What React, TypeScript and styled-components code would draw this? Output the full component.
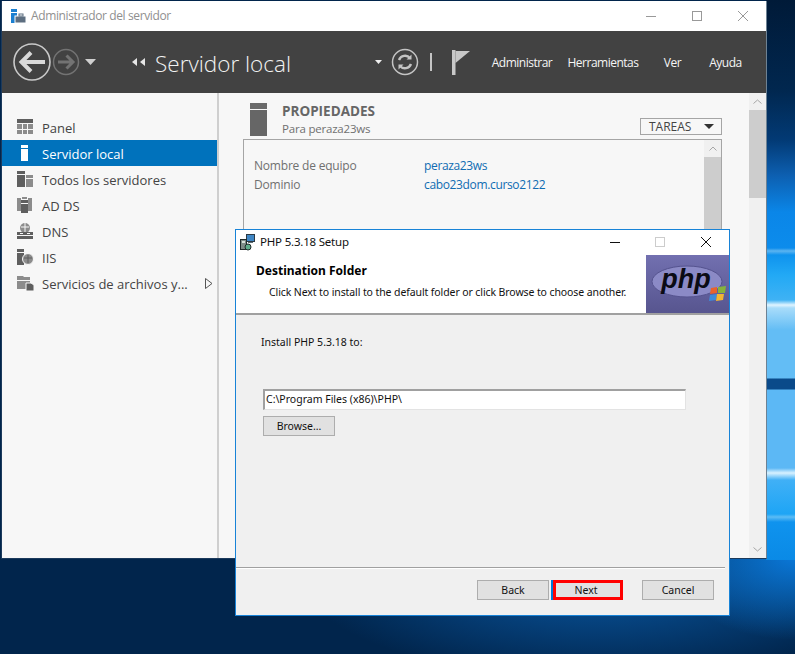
import React from "react";
import styled, { createGlobalStyle } from "styled-components";

const GlobalStyle = createGlobalStyle`
  html, body { margin: 0; padding: 0; height: 100%; overflow: hidden; }
  #root { height: 100%; }
`;

const navItems = [
  { label: "Panel", icon: "panel" },
  { label: "Servidor local", icon: "server", active: true },
  { label: "Todos los servidores", icon: "all" },
  { label: "AD DS", icon: "adds" },
  { label: "DNS", icon: "dns" },
  { label: "IIS", icon: "iis" },
  { label: "Servicios de archivos y...", icon: "files", more: true },
];

function NavIcon({ name, active }: { name: string; active?: boolean }) {
  const c = active ? "#fff" : "#5f5f5f";
  const l = "#8c8c8c";
  return (
    <svg width="17" height="16" viewBox="0 0 17 16">
      {name === "panel" && (
        <>
          <rect x="0" y="0" width="16" height="4" fill={c} />
          <rect x="0" y="5" width="5" height="5" fill={l} />
          <rect x="6" y="5" width="4" height="5" fill={l} />
          <rect x="11" y="5" width="5" height="5" fill={l} />
          <rect x="0" y="11" width="5" height="4" fill={l} />
          <rect x="6" y="11" width="4" height="4" fill={l} />
          <rect x="11" y="11" width="5" height="4" fill={l} />
        </>
      )}
      {name === "server" && (
        <>
          <rect x="4" y="0" width="7" height="3" fill={c} />
          <rect x="4" y="4" width="7" height="12" fill={c} />
        </>
      )}
      {name === "all" && (
        <>
          <rect x="0" y="0" width="8" height="3" fill={c} />
          <rect x="0" y="4" width="8" height="12" fill={c} />
          <rect x="9" y="4" width="7" height="3" fill={l} />
          <rect x="9" y="8" width="7" height="8" fill={l} />
        </>
      )}
      {name === "adds" && (
        <>
          <rect x="0" y="1" width="4" height="13" fill={l} />
          <rect x="11" y="1" width="4" height="13" fill={l} />
          <rect x="5" y="0" width="5" height="2" fill={l} />
          <rect x="4" y="3" width="7" height="3" fill={c} />
          <rect x="4" y="7" width="7" height="9" fill={c} />
        </>
      )}
      {name === "dns" && (
        <>
          <circle cx="8" cy="5" r="5" fill={l} />
          <path d="M4 4h8M8 0v9" stroke="#f7f7f7" strokeWidth="1" />
          <rect x="0" y="9" width="16" height="3" fill={c} />
          <rect x="0" y="13" width="16" height="3" fill={c} />
          <rect x="3" y="10" width="3" height="1" fill="#f7f7f7" />
          <rect x="10" y="10" width="3" height="1" fill="#f7f7f7" />
        </>
      )}
      {name === "iis" && (
        <>
          <rect x="0" y="0" width="7" height="3" fill={c} />
          <rect x="0" y="4" width="7" height="12" fill={c} />
          <circle cx="11" cy="10" r="5.5" fill={l} stroke="#f7f7f7" />
          <path d="M7 9h8M11 6v8" stroke="#5f5f5f" strokeWidth="1" />
        </>
      )}
      {name === "files" && (
        <>
          <path d="M0 1h6l1 1h6v3H0z" fill={l} />
          <rect x="0" y="6" width="13" height="8" fill={l} />
          <path d="M9 8h5l3 2v6H9z" fill={c} stroke="#f7f7f7" />
        </>
      )}
    </svg>
  );
}

export default function App() {
  return (
    <Desktop>
      <GlobalStyle />
      <ServerWindow>
        <TitleBar>
          <svg width="15" height="15" viewBox="0 0 15 15">
            <rect x="0" y="0" width="6" height="3" fill="#1a7fd0" />
            <rect x="0" y="4" width="6" height="10" fill="#1a7fd0" />
            <rect x="4" y="7" width="11" height="7" fill="#5d6e80" stroke="#fff" strokeWidth="1" />
            <rect x="8" y="5" width="4" height="2" fill="none" stroke="#5d6e80" />
          </svg>
          <AppTitle>Administrador del servidor</AppTitle>
          <WindowControls>
            <svg width="120" height="14" viewBox="0 0 120 14">
              <path d="M0 7.5h10" stroke="#999" />
              <rect x="46.5" y="2.5" width="9" height="9" fill="none" stroke="#999" />
              <path d="M92 2l10 10M102 2L92 12" stroke="#999" />
            </svg>
          </WindowControls>
        </TitleBar>

        <DarkBar>
          <svg width="104" height="40" viewBox="0 0 104 40">
            <circle cx="19" cy="20" r="18" fill="none" stroke="#c9c9c9" strokeWidth="1.6" />
            <path d="M32 20H9M18 10.5L8.5 20l9.5 9.5" fill="none" stroke="#d9d9d9" strokeWidth="4" />
            <circle cx="53" cy="20" r="12.5" fill="none" stroke="#737373" strokeWidth="1.5" />
            <path d="M45 20h15M53.5 13.5L60 20l-6.5 6.5" fill="none" stroke="#737373" strokeWidth="3" />
            <path d="M72 17h11l-5.5 6z" fill="#cfcfcf" />
          </svg>
          <Crumb>
            <svg width="14" height="8" viewBox="0 0 14 8">
              <path d="M5 0v8L0 4zM13 0v8L8 4z" fill="#e6e6e6" />
            </svg>
            <PageTitle>Servidor local</PageTitle>
          </Crumb>
          <BarTools>
            <svg width="77" height="30" viewBox="0 0 77 30">
              <path d="M0 13h7l-3.5 4z" fill="#eee" />
              <circle cx="30" cy="15" r="12.5" fill="none" stroke="#c4c4c4" strokeWidth="1.5" />
              <path d="M24 13a6.5 6.5 0 0 1 11-2M36 17a6.5 6.5 0 0 1-11 2" fill="none" stroke="#c4c4c4" strokeWidth="2.4" />
              <path d="M36.5 7.5v5h-5zM23.5 22.5v-5h5z" fill="#c4c4c4" />
              <rect x="55" y="6" width="2" height="18" fill="#c4c4c4" />
            </svg>
            <svg width="18" height="25" viewBox="0 0 18 25">
              <rect x="0" y="0" width="3.5" height="25" fill="#c8c8c8" />
              <path d="M3.5 1H18L3.5 13z" fill="#c8c8c8" />
            </svg>
          </BarTools>
          <Menu>
            <MenuItem $w={76}>Administrar</MenuItem>
            <MenuItem $w={86}>Herramientas</MenuItem>
            <MenuItem $w={53}>Ver</MenuItem>
            <MenuItem $w={53}>Ayuda</MenuItem>
          </Menu>
        </DarkBar>

        <Body>
          <Sidebar>
            {navItems.map((item) => (
              <NavRow key={item.label} $active={item.active}>
                <NavIcon name={item.icon} active={item.active} />
                <NavLabel>{item.label}</NavLabel>
                {item.more && (
                  <More width="8" height="11" viewBox="0 0 8 11">
                    <path d="M.5.5l6.5 5-6.5 5z" fill="none" stroke="#555" />
                  </More>
                )}
              </NavRow>
            ))}
          </Sidebar>

          <Content>
            <PropHead>
              <svg width="17" height="33" viewBox="0 0 17 33">
                <rect x="0" y="0" width="17" height="6" fill="#6a6a6a" />
                <rect x="0" y="7" width="17" height="26" fill="#666" />
              </svg>
              <PropTitles>
                <PropTitle>PROPIEDADES</PropTitle>
                <PropSub>Para peraza23ws</PropSub>
              </PropTitles>
              <TasksButton>
                TAREAS
                <svg width="10" height="5" viewBox="0 0 10 5">
                  <path d="M0 0h10L5 5z" fill="#333" />
                </svg>
              </TasksButton>
            </PropHead>
            <PropBox>
              <PropRows>
                <PropRow>
                  <PropName>Nombre de equipo</PropName>
                  <PropValue>peraza23ws</PropValue>
                </PropRow>
                <PropRow>
                  <PropName>Dominio</PropName>
                  <PropValue>cabo23dom.curso2122</PropValue>
                </PropRow>
              </PropRows>
              <InnerScroll>
                <ScrollArrow>
                  <svg width="8" height="5" viewBox="0 0 8 5">
                    <path d="M.5 4.5L4 1l3.5 3.5" fill="none" stroke="#a6a6a6" />
                  </svg>
                </ScrollArrow>
              </InnerScroll>
            </PropBox>
          </Content>

          <Scrollbar>
            <ScrollArrow>
              <svg width="9" height="5" viewBox="0 0 9 5">
                <path d="M.5 4.5L4.5 1l4 3.5" fill="none" stroke="#a6a6a6" />
              </svg>
            </ScrollArrow>
            <ScrollThumb />
            <BottomArrow>
              <svg width="9" height="5" viewBox="0 0 9 5">
                <path d="M.5.5l4 3.5 4-3.5" fill="none" stroke="#a6a6a6" />
              </svg>
            </BottomArrow>
          </Scrollbar>
        </Body>
      </ServerWindow>

      <Dialog>
        <DialogTitleBar>
          <svg width="16" height="17" viewBox="0 0 16 17">
            <rect x="7.5" y="0.5" width="8" height="7" fill="#3f86c4" stroke="#2b3a45" />
            <rect x="9" y="8" width="5" height="1" fill="#5b6b70" />
            <rect x="1.5" y="5.5" width="6" height="10" fill="#7f8d88" stroke="#1f2a2a" />
            <rect x="3" y="7" width="3" height="2" fill="#d9e3dd" />
            <circle cx="9" cy="13" r="3" fill="#5fae8c" stroke="#1f2a2a" />
          </svg>
          <DialogTitle>PHP 5.3.18 Setup</DialogTitle>
          <DialogControls>
            <svg width="110" height="12" viewBox="0 0 110 12">
              <path d="M0 6.5h10" stroke="#111" />
              <rect x="45.5" y="1.5" width="9" height="9" fill="none" stroke="#ccc" />
              <path d="M91 1l10 10M101 1L91 11" stroke="#111" />
            </svg>
          </DialogControls>
        </DialogTitleBar>
        <Banner>
          <BannerText>
            <BannerTitle>Destination Folder</BannerTitle>
            <BannerSub>Click Next to install to the default folder or click Browse to choose another.</BannerSub>
          </BannerText>
          <PhpLogo>
            <svg width="83" height="58" viewBox="0 0 83 58">
              <ellipse cx="41" cy="26.5" rx="35" ry="15.5" fill="#8b8ac6" stroke="#55538f" />
              <text x="40" y="33" textAnchor="middle" fontFamily="Liberation Sans, sans-serif" fontStyle="italic" fontWeight="700" fontSize="27" fill="#0b0b14">php</text>
              <path d="M65 33l6-1v6l-7 1z" fill="#e8632c" />
              <path d="M72 32l8-1-1 7-7 0z" fill="#86b33c" />
              <path d="M64 40l7-1-1 6-7 1z" fill="#3d8bd9" />
              <path d="M71 39h7l-1 6-7 1z" fill="#f2b632" />
            </svg>
          </PhpLogo>
        </Banner>
        <DialogBody>
          <InstallLabel>Install PHP 5.3.18 to:</InstallLabel>
          <PathInput>C:\Program Files (x86)\PHP\</PathInput>
          <BrowseButton>Browse...</BrowseButton>
        </DialogBody>
        <DialogFooter>
          <DialogButton>Back</DialogButton>
          <NextButton>Next</NextButton>
          <CancelButton>Cancel</CancelButton>
        </DialogFooter>
      </Dialog>
    </Desktop>
  );
}

const uiFont = `"Open Sans", "Noto Sans", sans-serif`;
const dlgFont = `"Noto Sans", "Open Sans", sans-serif`;

const Desktop = styled.div`
  position: relative;
  width: 795px;
  height: 654px;
  overflow: hidden;
  background:
    linear-gradient(
        180deg,
        #001a38 0,
        #01274f 90px,
        #023a75 140px,
        #0d5fb0 175px,
        #0a86e8 212px,
        #0c8cec 248px,
        #5cb4f0 251px,
        #0f93ee 255px,
        #22a9f5 275px,
        #3fb2f4 300px,
        #e0f4ff 305px,
        #a8dcfa 308px,
        #63bdf5 330px,
        #63bdf5 378px,
        #0a4a8a 379px,
        #0a4a8a 389px,
        #5cb8f5 390px,
        #5cb8f5 468px,
        #d8f1ff 473px,
        #40b0f6 480px,
        #1ea5f5 514px,
        #5cbcf5 517px,
        #0f93ee 522px,
        #0a8ae6 560px
      )
      right top / 29px 560px no-repeat,
    radial-gradient(ellipse 130px 85px at 795px 555px, rgba(10, 125, 225, 0.95), transparent),
    radial-gradient(ellipse 300px 105px at 600px 575px, rgba(10, 92, 170, 0.95), transparent),
    #01254c;
`;

const ServerWindow = styled.div`
  position: absolute;
  left: 1px;
  top: 1px;
  width: 766px;
  height: 558px;
  box-sizing: border-box;
  border-left: 1px solid #1c3a5c;
  border-right: 1px solid #6d8294;
  border-bottom: 1px solid #1c3a5c;
  display: flex;
  flex-direction: column;
  background: #f7f7f7;
`;

const TitleBar = styled.div`
  height: 30px;
  flex: none;
  background: #fff;
  display: flex;
  align-items: center;
  padding-left: 9px;
`;

const AppTitle = styled.span`
  margin: -1px 0 0 5px;
  font: 12px ${uiFont};
  letter-spacing: -0.38px;
  color: #8f8f8f;
`;

const WindowControls = styled.div`
  margin-left: auto;
  display: flex;
`;

const DarkBar = styled.div`
  height: 62px;
  flex: none;
  background: #424242;
  display: flex;
  align-items: center;
  padding-left: 11px;
`;

const Crumb = styled.div`
  display: flex;
  align-items: center;
  gap: 9px;
  margin-left: 15px;
  width: 243px;
`;

const PageTitle = styled.span`
  margin-top: 2px;
  font: 300 22.5px ${uiFont};
  color: #f2f2f2;
`;

const BarTools = styled.div`
  display: flex;
  align-items: center;
  width: 116px;
`;

const Menu = styled.div`
  display: flex;
  margin-left: -7px;
`;

const MenuItem = styled.span<{ $w: number }>`
  width: ${(p) => p.$w}px;
  font: 12px ${uiFont};
  letter-spacing: -0.5px;
  color: #f5f5f5;
  text-align: center;
  white-space: nowrap;
`;

const Body = styled.div`
  flex: 1;
  display: flex;
  min-height: 0;
`;

const Sidebar = styled.nav`
  width: 215px;
  flex: none;
  padding-top: 21px;
  border-right: 2px solid #cfcfcf;
`;

const NavRow = styled.div<{ $active?: boolean }>`
  height: 26px;
  display: flex;
  align-items: center;
  padding-left: 15px;
  background: ${(p) => (p.$active ? "#0072bc" : "transparent")};
  color: ${(p) => (p.$active ? "#fff" : "#444")};
`;

const NavLabel = styled.span`
  margin: 2px 0 0 8px;
  font: 13px ${uiFont};
  white-space: nowrap;
`;

const More = styled.svg`
  margin-left: auto;
  margin-right: 4px;
`;

const Content = styled.main`
  flex: 1;
  min-width: 0;
  padding: 10px 27px 0 24px;
  overflow: hidden;
`;

const PropHead = styled.div`
  display: flex;
  align-items: flex-start;
  height: 36px;
  padding-left: 7px;
  position: relative;
`;

const PropTitles = styled.div`
  margin: -1px 0 0 15px;
`;

const PropTitle = styled.div`
  font: 700 13.5px/18px ${uiFont};
  color: #666;
`;

const PropSub = styled.div`
  font: 11.5px/17px ${uiFont};
  letter-spacing: -0.2px;
  color: #707070;
`;

const TasksButton = styled.div`
  position: absolute;
  right: 0;
  top: 15px;
  width: 82px;
  height: 17px;
  box-sizing: border-box;
  border: 1px solid #a5a5a5;
  display: flex;
  align-items: center;
  justify-content: space-between;
  padding: 0 7px 0 8px;
  font: 12px ${uiFont};
  color: #444;
`;

const PropBox = styled.section`
  width: 479px;
  height: 300px;
  box-sizing: border-box;
  border: 1px solid #a5a5a5;
  display: flex;
  justify-content: space-between;
`;

const PropRows = styled.div`
  padding: 16px 0 0 10px;
`;

const PropRow = styled.div`
  display: flex;
  height: 19px;
  align-items: center;
  font: 12px ${uiFont};
`;

const PropName = styled.span`
  width: 170px;
  letter-spacing: -0.2px;
  color: #707070;
`;

const PropValue = styled.span`
  letter-spacing: -0.35px;
  color: #0f6cb2;
`;

const InnerScroll = styled.div`
  width: 17px;
  background: #cdcdcd;
`;

const ScrollArrow = styled.div`
  height: 17px;
  background: #f0f0f0;
  display: flex;
  align-items: center;
  justify-content: center;
`;

const Scrollbar = styled.div`
  width: 17px;
  flex: none;
  background: #f0f0f0;
  display: flex;
  flex-direction: column;
`;

const ScrollThumb = styled.div`
  height: 88px;
  background: #cdcdcd;
`;

const BottomArrow = styled(ScrollArrow)`
  margin-top: auto;
`;

const Dialog = styled.div`
  position: absolute;
  left: 235px;
  top: 229px;
  width: 495px;
  height: 387px;
  box-sizing: border-box;
  border: 1px solid #1883d7;
  background: #f0f0f0;
  display: flex;
  flex-direction: column;
  font-family: ${dlgFont};
`;

const DialogTitleBar = styled.div`
  height: 25px;
  flex: none;
  background: #fff;
  display: flex;
  align-items: center;
  padding: 0 0 1px 3px;
  box-sizing: border-box;
`;

const DialogTitle = styled.span`
  margin: -1px 0 0 5px;
  font-size: 11.5px;
  letter-spacing: -0.2px;
  color: #111;
`;

const DialogControls = styled.div`
  margin-left: auto;
  margin-right: 9px;
  display: flex;
`;

const Banner = styled.div`
  height: 58px;
  flex: none;
  background: #fff;
  display: flex;
  justify-content: space-between;
  border-bottom: 2px solid #a0a0a0;
`;

const BannerText = styled.div`
  padding: 7px 0 0 20px;
`;

const BannerTitle = styled.div`
  font-size: 12px;
  font-weight: 700;
  line-height: 18px;
  color: #000;
`;

const BannerSub = styled.div`
  margin: 5px 0 0 13px;
  font-size: 10.5px;
  line-height: 14px;
  letter-spacing: -0.1px;
  color: #111;
  white-space: nowrap;
`;

const PhpLogo = styled.div`
  width: 83px;
  height: 58px;
  background: linear-gradient(180deg, #7270b0, #57558f);
  display: flex;
`;

const DialogBody = styled.div`
  flex: 1;
  padding: 20px 0 0 25px;
`;

const InstallLabel = styled.div`
  font-size: 10.5px;
  line-height: 14px;
  color: #111;
`;

const PathInput = styled.div`
  margin: 40px 0 0 2px;
  width: 423px;
  height: 21px;
  box-sizing: border-box;
  padding-left: 1px;
  background: #fff;
  border: 1px solid #e3e3e3;
  border-top: 2px solid #a0a0a0;
  border-left: 2px solid #a0a0a0;
  font-size: 10.5px;
  line-height: 16px;
  color: #111;
`;

const WinButton = styled.div`
  box-sizing: border-box;
  border: 1px solid #adadad;
  background: #e1e1e1;
  display: flex;
  align-items: center;
  justify-content: center;
  font-size: 10.5px;
  color: #111;
`;

const BrowseButton = styled(WinButton)`
  margin: 6px 0 0 2px;
  width: 72px;
  height: 20px;
`;

const DialogFooter = styled.div`
  height: 48px;
  flex: none;
  margin-right: 4px;
  border-top: 1px solid #a0a0a0;
  box-shadow: inset 0 1px 0 #fff;
  box-sizing: border-box;
  display: flex;
  align-items: flex-start;
  padding: 12px 0 0 241px;
`;

const DialogButton = styled(WinButton)`
  width: 72px;
  height: 20px;
`;

const NextButton = styled(DialogButton)`
  margin-left: 4px;
  width: 70px;
  padding-right: 4px;
  border: 3px solid #f00;
  box-shadow: -2px 0 0 #0078d7;
`;

const CancelButton = styled(DialogButton)`
  margin-left: 19px;
`;
